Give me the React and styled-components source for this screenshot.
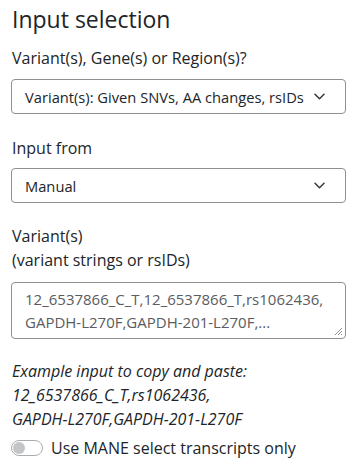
import React from "react";
import styled, { createGlobalStyle } from "styled-components";

const GlobalStyle = createGlobalStyle`
  html, body {
    margin: 0;
    padding: 0;
    background: #fff;
  }
  body {
    font-family: "Open Sans", "Noto Sans", sans-serif;
    color: #212529;
  }
`;

const Panel = styled.div`
  display: flex;
  flex-direction: column;
  padding: 0 13px 0 11px;
  width: 359px;
  box-sizing: border-box;
`;

const Title = styled.h2`
  margin: 5px 0 0 1px;
  font-size: 23px;
  font-weight: 400;
  line-height: 28px;
`;

const Field = styled.div`
  display: flex;
  flex-direction: column;
  margin-top: ${p => p.$gap || 22}px;
`;

const Label = styled.label`
  font-size: 16px;
  line-height: 24px;
  margin-left: 1px;
  margin-bottom: ${p => p.$space || 8}px;
`;

const SelectBox = styled.div`
  display: flex;
  align-items: center;
  justify-content: space-between;
  height: 35px;
  box-sizing: border-box;
  padding: 0 20px 0 13px;
  border: 1px solid #8d8f92;
  border-radius: 4px;
  font-size: 14.7px;
  color: #212529;
  white-space: nowrap;
`;

const Chevron = () => (
  <svg width="11" height="7" viewBox="0 0 11 7" fill="none">
    <path d="M1 1.2l4.5 4.5 4.5-4.5" stroke="#343a40" strokeWidth="1.5" strokeLinecap="round" strokeLinejoin="round" />
  </svg>
);

const TextArea = styled.div`
  position: relative;
  height: 57px;
  box-sizing: border-box;
  padding: 5px 13px;
  border: 1px solid #8d8f92;
  border-radius: 4px;
  font-size: 15px;
  line-height: 22.5px;
  color: #595c60;
  white-space: nowrap;
  overflow: hidden;
`;

const Grip = styled.svg`
  position: absolute;
  right: 2px;
  bottom: 2px;
`;

const Example = styled.div`
  margin-top: 20px;
  font-style: italic;
  font-size: 16px;
  line-height: 24px;
  margin-left: 1px;
`;

const SwitchRow = styled.div`
  display: flex;
  align-items: center;
  gap: 8px;
  margin-top: 5px;
  font-size: 16px;
  line-height: 24px;
`;

const Switch = styled.span`
  display: inline-flex;
  align-items: center;
  width: 32px;
  height: 16px;
  box-sizing: border-box;
  border: 1px solid #a9acb0;
  border-radius: 8px;
  padding: 0 1px;
  &::before {
    content: "";
    width: 12px;
    height: 12px;
    border-radius: 50%;
    background: #c4c5c7;
  }
`;

export default function App() {
  return (
    <>
      <GlobalStyle />
      <Panel>
        <Title>Input selection</Title>
        <Field $gap={13}>
          <Label $space={9}>Variant(s), Gene(s) or Region(s)?</Label>
          <SelectBox>
            Variant(s): Given SNVs, AA changes, rsIDs
            <Chevron />
          </SelectBox>
        </Field>
        <Field>
          <Label>Input from</Label>
          <SelectBox>
            Manual
            <Chevron />
          </SelectBox>
        </Field>
        <Field $gap={21}>
          <Label $space={10}>
            Variant(s)
            <br />
            (variant strings or rsIDs)
          </Label>
          <TextArea>
            12_6537866_C_T,12_6537866_T,rs1062436,
            <br />
            GAPDH-L270F,GAPDH-201-L270F,...
            <Grip width="10" height="10" viewBox="0 0 10 10">
              <path d="M9 2L2 9M9 5L5 9M9 8L8 9" stroke="#8d8f92" strokeWidth="1" />
            </Grip>
          </TextArea>
        </Field>
        <Example>
          Example input to copy and paste:
          <br />
          12_6537866_C_T,rs1062436,
          <br />
          GAPDH-L270F,GAPDH-201-L270F
        </Example>
        <SwitchRow>
          <Switch />
          Use MANE select transcripts only
        </SwitchRow>
      </Panel>
    </>
  );
}
